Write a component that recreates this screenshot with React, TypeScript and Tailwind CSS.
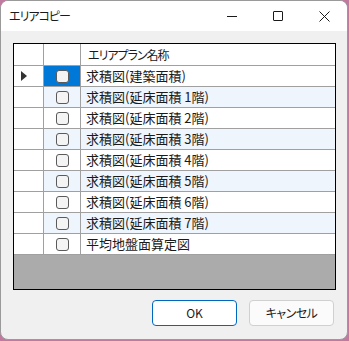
import React from "react";

const rows = [
  "求積図(建築面積)",
  "求積図(延床面積 1階)",
  "求積図(延床面積 2階)",
  "求積図(延床面積 3階)",
  "求積図(延床面積 4階)",
  "求積図(延床面積 5階)",
  "求積図(延床面積 6階)",
  "求積図(延床面積 7階)",
  "平均地盤面算定図",
];

function CheckBox() {
  return <div className="h-[13px] w-[13px] rounded-[3px] border border-[#5a5a5a] bg-[#f4f4f4]" />;
}

export default function App() {
  return (
    <div
      className="h-[341px] w-[349px] bg-[#c07aa0] text-[#1a1a1a]"
      style={{ fontFamily: '"Noto Sans CJK JP", "Noto Sans", sans-serif' }}
    >
      <div className="flex h-[340px] w-[348px] flex-col overflow-hidden rounded-[8px] border border-[#9a9a9a] bg-[#f0f0f0]">
        {/* Title bar */}
        <div className="flex h-[30px] shrink-0 items-center bg-white">
          <span className="pl-[8px] text-[12px] leading-none tracking-[-1px] [font-feature-settings:'palt']">
            エリアコピー
          </span>
          <div className="ml-auto flex h-full">
            <div className="flex w-[46px] items-center justify-center">
              <div className="h-px w-[10px] bg-[#1a1a1a]" />
            </div>
            <div className="flex w-[46px] items-center justify-center">
              <div className="h-[10px] w-[10px] rounded-[1px] border border-[#1a1a1a]" />
            </div>
            <div className="flex w-[46px] items-center justify-center">
              <svg width="11" height="11" viewBox="0 0 11 11">
                <path d="M0.5 0.5 L10.5 10.5 M10.5 0.5 L0.5 10.5" stroke="#1a1a1a" strokeWidth="1" />
              </svg>
            </div>
          </div>
        </div>

        {/* Body */}
        <div className="flex flex-1 flex-col px-[12px] pt-[12px]">
          <div className="flex h-[247px] w-[323px] flex-col border border-black bg-[#ababab]">
            {/* Header */}
            <div className="flex h-[22px] shrink-0 border-b border-[#a0a0a0] bg-white text-[12px]">
              <div className="w-[30px] border-r border-[#a0a0a0]" />
              <div className="w-[37px] border-r border-[#a0a0a0]" />
              <div className="flex flex-1 items-center pl-[7px] tracking-[-1px] [font-feature-settings:'palt']">
                エリアプラン名称
              </div>
            </div>
            {rows.map((name, i) => {
              const bg = i % 2 === 1 ? "bg-[#eef5fd]" : "bg-white";
              return (
                <div key={name} className="flex h-[21px] shrink-0 border-b border-[#a0a0a0] text-[13px]">
                  <div className="flex w-[30px] items-center border-r border-[#a0a0a0] bg-white pl-[7px]">
                    {i === 0 && (
                      <svg width="6" height="10" viewBox="0 0 6 10">
                        <path d="M0 0 L6 5 L0 10 Z" fill="#333" />
                      </svg>
                    )}
                  </div>
                  <div
                    className={`flex w-[37px] items-center justify-center border-r border-[#a0a0a0] ${
                      i === 0 ? "bg-[#0078d7]" : bg
                    }`}
                  >
                    <CheckBox />
                  </div>
                  <div className={`flex flex-1 items-center pl-[5px] ${bg}`}>{name}</div>
                </div>
              );
            })}
          </div>

          {/* Buttons */}
          <div className="mt-[10px] flex justify-end gap-[12px] pr-[1px]">
            <button className="h-[26px] w-[85px] rounded-[4px] border border-[#0067c0] bg-white text-[12px]">
              OK
            </button>
            <button className="h-[26px] w-[85px] rounded-[4px] border border-[#d0d0d0] bg-[#fbfbfb] text-[12px] tracking-[-0.5px] [font-feature-settings:'palt']">
              キャンセル
            </button>
          </div>
        </div>
      </div>
    </div>
  );
}
